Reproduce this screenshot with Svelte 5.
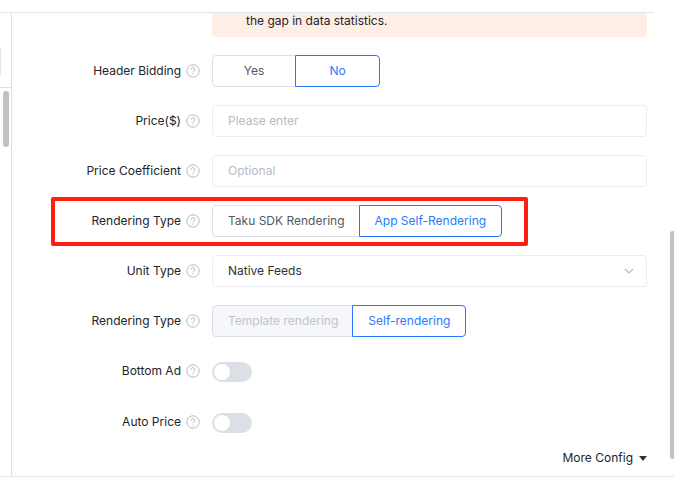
<script lang="ts">
	let headerBidding = $state('No');
	let price = $state('');
	let coefficient = $state('');
	let sdkRendering = $state('App Self-Rendering');
	let unitType = $state('Native Feeds');
	let rendering = $state('Self-rendering');
	let bottomAd = $state(false);
	let autoPrice = $state(false);
</script>

{#snippet help()}
	<svg class="help" viewBox="0 0 14 14" aria-hidden="true">
		<circle cx="7" cy="7" r="6.2" />
		<path d="M5.1 5.6a1.9 1.9 0 1 1 2.8 1.6c-.6.4-.9.6-.9 1.2" />
		<path d="M7 9.5v1.2" />
	</svg>
{/snippet}

{#snippet radio(name, option, current, pick, disabled = false)}
	<label class="option" class:active={option === current} class:disabled>
		<input
			type="radio"
			{name}
			value={option}
			checked={option === current}
			{disabled}
			onchange={() => pick(option)}
		/>
		<span>{option}</span>
	</label>
{/snippet}

<div class="page">
	<div class="topbar"></div>
	<div class="body">
		<aside class="side">
			<div class="side-head"><div class="stub"></div></div>
			<div class="side-thumb"></div>
		</aside>

		<form class="form">
			<div class="notice">the gap in data statistics.</div>

			<div class="row" role="radiogroup" aria-labelledby="bidding-label">
				<span class="label" id="bidding-label">Header Bidding {@render help()}</span>
				<div class="group even">
					{@render radio('bidding', 'Yes', headerBidding, (v) => (headerBidding = v))}
					{@render radio('bidding', 'No', headerBidding, (v) => (headerBidding = v))}
				</div>
			</div>

			<div class="row">
				<label class="label" for="price">Price($) {@render help()}</label>
				<input class="field" id="price" type="text" placeholder="Please enter" bind:value={price} />
			</div>

			<div class="row">
				<label class="label" for="coefficient">Price Coefficient {@render help()}</label>
				<input
					class="field"
					id="coefficient"
					type="text"
					placeholder="Optional"
					bind:value={coefficient}
				/>
			</div>

			<div class="row marked" role="radiogroup" aria-labelledby="sdk-label">
				<span class="label" id="sdk-label">Rendering Type {@render help()}</span>
				<div class="group">
					{@render radio('sdk', 'Taku SDK Rendering', sdkRendering, (v) => (sdkRendering = v))}
					{@render radio('sdk', 'App Self-Rendering', sdkRendering, (v) => (sdkRendering = v))}
				</div>
			</div>

			<div class="row">
				<label class="label" for="unit">Unit Type {@render help()}</label>
				<div class="select">
					<select class="field" id="unit" bind:value={unitType}>
						<option>Native Feeds</option>
					</select>
					<svg class="chevron" viewBox="0 0 10 6" aria-hidden="true">
						<path d="M1 1l4 4 4-4" />
					</svg>
				</div>
			</div>

			<div class="row" role="radiogroup" aria-labelledby="type-label">
				<span class="label" id="type-label">Rendering Type {@render help()}</span>
				<div class="group">
					{@render radio('type', 'Template rendering', rendering, (v) => (rendering = v), true)}
					{@render radio('type', 'Self-rendering', rendering, (v) => (rendering = v))}
				</div>
			</div>

			<div class="row toggle">
				<label class="label" for="bottom-ad">Bottom Ad {@render help()}</label>
				<input class="switch" id="bottom-ad" type="checkbox" role="switch" bind:checked={bottomAd} />
			</div>

			<div class="row toggle">
				<label class="label" for="auto-price">Auto Price {@render help()}</label>
				<input class="switch" id="auto-price" type="checkbox" role="switch" bind:checked={autoPrice} />
			</div>

			<button type="button" class="more">
				More Config
				<svg class="caret" viewBox="0 0 8 5" aria-hidden="true"><path d="M0 0h8L4 5z" /></svg>
			</button>
		</form>

		<div class="scroll"><div class="thumb"></div></div>
	</div>
</div>

<style>
	:global(body) {
		background: #fff;
	}

	.page,
	.page * {
		box-sizing: border-box;
	}

	.page {
		color: #222428;
		font-family: Inter, 'Liberation Sans', sans-serif;
		font-size: 12px;
		line-height: 16px;
	}

	.topbar {
		height: 13px;
		margin-right: 20px;
		border-bottom: 1px solid #e1e5ee;
	}

	.body {
		display: flex;
		border-bottom: 1px solid #e4e7ed;
	}

	.side {
		flex: none;
		width: 12px;
		border-right: 1px solid #dcdfe6;
	}

	.side-head {
		height: 75px;
		padding-top: 34px;
		border-bottom: 1px solid #dcdfe6;
	}

	.stub {
		width: 1px;
		height: 28px;
		background: #e4e9f2;
	}

	.side-thumb {
		width: 6px;
		height: 56px;
		margin: 3px 0 0 3px;
		border-radius: 3px;
		background: #c1c1c1;
	}

	.form {
		flex: 1;
		min-width: 0;
		display: flex;
		flex-direction: column;
		gap: 18px;
		padding: 0 23px 10px 0;
	}

	.notice {
		height: 24px;
		margin-left: 200px;
		padding-left: 34px;
		border-radius: 0 0 4px 4px;
		background: #ffeee6;
	}

	.row {
		position: relative;
		display: flex;
		align-items: center;
		min-height: 32px;
	}

	.label {
		flex: none;
		display: flex;
		justify-content: flex-end;
		align-items: center;
		gap: 5px;
		width: 188px;
		margin-right: 12px;
	}

	.help {
		width: 14px;
		height: 14px;
		fill: none;
		stroke: #b8b8b8;
		stroke-width: 1;
	}

	.group {
		display: flex;
	}

	.option {
		display: flex;
		justify-content: center;
		align-items: center;
		height: 32px;
		padding: 0 15px;
		border: 1px solid #dcdfe6;
		background: #fff;
		color: #55585e;
		white-space: nowrap;
		cursor: pointer;
	}

	.even .option {
		min-width: 84px;
	}

	.option:first-child {
		border-radius: 4px 0 0 4px;
	}

	.option:last-child {
		margin-left: -2px;
		border-radius: 0 4px 4px 0;
	}

	.even .option:last-child {
		min-width: 85px;
		margin-left: -1px;
	}

	.option.active {
		position: relative;
		border-color: #2878ff;
		color: #2878ff;
	}

	.option.disabled {
		background: #f5f7fa;
		color: #c0c4cc;
		cursor: not-allowed;
	}

	.option input {
		position: absolute;
		opacity: 0;
		pointer-events: none;
	}

	/* red frame round the setting being explained */
	.marked::after {
		content: '';
		position: absolute;
		top: -8px;
		bottom: -9px;
		left: 39px;
		box-sizing: border-box;
		width: 477px;
		border: 4px solid #ff1e10;
		border-radius: 2px;
		pointer-events: none;
	}

	.field {
		flex: 1;
		min-width: 0;
		width: 100%;
		height: 32px;
		margin: 0;
		padding: 0 15px;
		border: 1px solid #ebedf2;
		border-radius: 4px;
		outline: none;
		background: #fff;
		color: #333;
		font: inherit;
		appearance: none;
	}

	input.field {
		padding-bottom: 2px;
	}

	.field::placeholder {
		color: #b8babf;
		opacity: 1;
	}

	.select {
		position: relative;
		flex: 1;
		display: flex;
	}

	.chevron {
		position: absolute;
		top: 13px;
		right: 13px;
		width: 10px;
		height: 6px;
		fill: none;
		stroke: #b8bbc2;
		stroke-width: 1.2;
		pointer-events: none;
	}

	.toggle {
		min-height: 33px;
	}

	.toggle .label {
		padding-bottom: 2px;
	}

	.switch {
		width: 40px;
		height: 20px;
		margin: 0;
		padding: 2px;
		border-radius: 10px;
		background: #dcdfe6;
		appearance: none;
		cursor: pointer;
	}

	.switch::before {
		content: '';
		display: block;
		width: 16px;
		height: 16px;
		border-radius: 50%;
		background: #fff;
	}

	.switch:checked {
		background: #2878ff;
	}

	.switch:checked::before {
		margin-left: 20px;
	}

	.more {
		display: flex;
		align-self: flex-end;
		align-items: center;
		gap: 6px;
		margin: -7px 0 0;
		padding: 0;
		border: 0;
		background: none;
		color: inherit;
		font: inherit;
		cursor: pointer;
	}

	.caret {
		width: 8px;
		height: 5px;
		fill: #333;
	}

	.scroll {
		flex: none;
		width: 4px;
		padding-top: 218px;
	}

	.thumb {
		height: 228px;
		border-radius: 3px 0 0 3px;
		background: #c1c1c1;
	}
</style>
